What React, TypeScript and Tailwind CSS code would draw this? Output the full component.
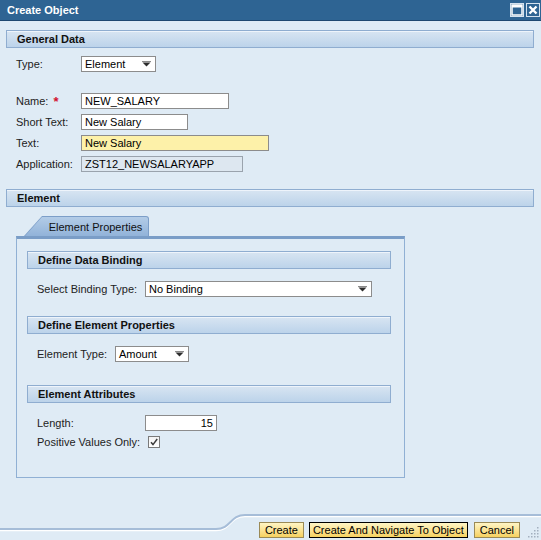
import React from "react";

const font = "font-['Liberation_Sans',Arial,sans-serif]";

function SectionHeader({ title }: { title: string }) {
  return (
    <div className="h-[18px] border border-[#8fadd0] bg-gradient-to-b from-[#d8e5f2] to-[#bcd3ea] pl-[10px] text-[11px] font-bold leading-[16px] text-[#111] shadow-[inset_0_1px_0_#eef4fb]">
      {title}
    </div>
  );
}

function Arrow() {
  return (
    <svg width="9" height="6" viewBox="0 0 9 6" className="shrink-0">
      <rect x="0" y="0" width="9" height="1" fill="#8a8a8a" />
      <polygon points="0.5,1.5 8.5,1.5 4.5,5.5" fill="#2d2d2d" />
    </svg>
  );
}

function Select({ value, width }: { value: string; width: string }) {
  return (
    <div
      className={`flex h-[16px] items-center justify-between border border-[#8c8c8c] bg-white pl-[3px] pr-[4px] text-[11px] leading-none text-black ${width}`}
    >
      <span>{value}</span>
      <Arrow />
    </div>
  );
}

function Input({
  value,
  width,
  tone = "white",
  right = false,
}: {
  value: string;
  width: string;
  tone?: "white" | "yellow" | "disabled";
  right?: boolean;
}) {
  const bg =
    tone === "yellow"
      ? "bg-[#fdf1a9] border-[#8c8c8c]"
      : tone === "disabled"
        ? "bg-[#dde7f0] border-[#9aa3ad]"
        : "bg-white border-[#8c8c8c]";
  return (
    <div
      className={`flex h-[16px] items-center border px-[3px] text-[11px] leading-none text-black ${bg} ${width} ${right ? "justify-end" : ""}`}
    >
      {value}
    </div>
  );
}

function Row({
  label,
  labelWidth,
  children,
  required = false,
}: {
  label: string;
  labelWidth: string;
  children: React.ReactNode;
  required?: boolean;
}) {
  return (
    <div className="flex h-[16px] items-center">
      <div className={`flex h-[16px] items-center text-[11px] leading-[16px] text-[#222] ${labelWidth}`}>
        {label}
        {required && <span className="ml-[5px] text-[13px] font-bold leading-none text-[#d3112e]">*</span>}
      </div>
      {children}
    </div>
  );
}

function Button({ label, focused = false, pad = "px-[5px]" }: { label: string; focused?: boolean; pad?: string }) {
  return (
    <button
      type="button"
      className={`flex h-[16px] items-center border bg-gradient-to-b from-[#fff5c4] to-[#f6d15e] text-[11px] leading-none text-black ${pad} ${
        focused ? "border-black" : "border-[#9a8a56]"
      }`}
    >
      {label}
    </button>
  );
}

export default function App() {
  return (
    <div className={`relative flex h-[540px] w-[541px] flex-col overflow-hidden bg-[#dfebf5] leading-[16px] ${font}`}>
      {/* title bar */}
      <div className="flex h-[21px] shrink-0 items-center justify-between border-b border-[#1f4870] bg-[#2e6493] pl-[7px] pr-[1px]">
        <span className="text-[11px] font-bold text-white">Create Object</span>
        <div className="flex gap-[2px]">
          <svg width="14" height="14" viewBox="0 0 14 14">
            <rect x="0" y="0" width="14" height="14" fill="#d4e2ef" />
            <rect x="1" y="1" width="12" height="12" fill="#2e6493" />
            <rect x="2" y="2" width="10" height="10" fill="none" stroke="#fff" strokeWidth="1.5" />
            <rect x="2" y="2" width="10" height="2.5" fill="#fff" />
          </svg>
          <svg width="14" height="14" viewBox="0 0 14 14">
            <rect x="0" y="0" width="14" height="14" fill="#d4e2ef" />
            <rect x="1" y="1" width="12" height="12" fill="#2e6493" />
            <path d="M3.5 3.5 L10.5 10.5 M10.5 3.5 L3.5 10.5" stroke="#fff" strokeWidth="2.4" />
          </svg>
        </div>
      </div>

      {/* body */}
      <div className="flex flex-1 flex-col px-[6px] pt-[9px]">
        <div className="w-[528px]">
          <SectionHeader title="General Data" />
        </div>

        <div className="mt-[8px] pl-[10px]">
          <Row label="Type:" labelWidth="w-[65px]">
            <Select value="Element" width="w-[75px]" />
          </Row>
          <div className="mt-[21px] flex flex-col gap-[5px]">
            <Row label="Name:" labelWidth="w-[65px]" required>
              <Input value="NEW_SALARY" width="w-[148px]" />
            </Row>
            <Row label="Short Text:" labelWidth="w-[65px]">
              <Input value="New Salary" width="w-[107px]" />
            </Row>
            <Row label="Text:" labelWidth="w-[65px]">
              <Input value="New Salary" width="w-[188px]" tone="yellow" />
            </Row>
            <Row label="Application:" labelWidth="w-[65px]">
              <Input value="ZST12_NEWSALARYAPP" width="w-[162px]" tone="disabled" />
            </Row>
          </div>
        </div>

        <div className="mt-[17px] w-[528px]">
          <SectionHeader title="Element" />
        </div>

        {/* tab strip */}
        <div className="ml-[18px] mt-[9px] flex">
          <div className="h-[20px] w-[125px] rounded-tr-[3px] bg-[#7c9ec8] [clip-path:polygon(18px_0,100%_0,100%_100%,0_100%)]">
            <div className="ml-[1px] mt-[1px] flex h-[19px] w-[123px] items-center justify-center rounded-tr-[2px] bg-gradient-to-b from-[#b3cce7] to-[#92b3d9] pl-[18px] text-[11px] text-[#111] [clip-path:polygon(17px_0,100%_0,100%_100%,0_100%)]">
              Element Properties
            </div>
          </div>
        </div>

        {/* tab panel */}
        <div className="ml-[10px] h-[242px] w-[389px] border border-t-[3px] border-[#90b0d4] border-t-[#7a9dc7] pl-[10px] pr-[13px] pt-[12px]">
          <SectionHeader title="Define Data Binding" />
          <div className="mt-[12px] pl-[10px]">
            <Row label="Select Binding Type:" labelWidth="w-[108px]">
              <Select value="No Binding" width="w-[227px]" />
            </Row>
          </div>

          <div className="mt-[19px]">
            <SectionHeader title="Define Element Properties" />
          </div>
          <div className="mt-[12px] pl-[10px]">
            <Row label="Element Type:" labelWidth="w-[78px]">
              <Select value="Amount" width="w-[74px]" />
            </Row>
          </div>

          <div className="mt-[23px]">
            <SectionHeader title="Element Attributes" />
          </div>
          <div className="mt-[12px] flex flex-col gap-[3px] pl-[10px]">
            <Row label="Length:" labelWidth="w-[108px]">
              <Input value="15" width="w-[72px]" right />
            </Row>
            <Row label="Positive Values Only:" labelWidth="w-[111px]">
              <svg width="12" height="12" viewBox="0 0 12 12">
                <defs>
                  <linearGradient id="cb" x1="0" y1="0" x2="0" y2="1">
                    <stop offset="0" stopColor="#f2f2f2" />
                    <stop offset="1" stopColor="#ffffff" />
                  </linearGradient>
                </defs>
                <rect x="0.5" y="0.5" width="11" height="11" fill="url(#cb)" stroke="#7a7a7a" />
                <path d="M3 6.2 L5 8.6 L9.2 3" fill="none" stroke="#3a3a3a" strokeWidth="1.5" />
              </svg>
            </Row>
          </div>
        </div>
      </div>

      {/* footer */}
      <div className="relative flex h-[32px] shrink-0 items-end justify-end pb-[2px] pr-[21px]">
        <svg className="absolute left-0 top-0" width="541" height="32" viewBox="0 0 541 32">
          <path d="M0 21 L216 21 C231 21 230 7 245 7 L541 7" fill="none" stroke="#fff" strokeWidth="1.5" transform="translate(0 1.5)" />
          <path d="M0 21 L216 21 C231 21 230 7 245 7 L541 7" fill="none" stroke="#a6bdd8" strokeWidth="2" />
        </svg>
        <div className="relative flex items-end gap-[5px]">
          <Button label="Create" />
          <Button label="Create And Navigate To Object" focused pad="px-[3px]" />
          <div className="ml-[1px] flex">
            <Button label="Cancel" />
          </div>
        </div>
        <svg className="absolute bottom-[1px] right-[1px]" width="14" height="14" viewBox="0 0 14 14">
          {[
            [11, 2],
            [8, 5],
            [11, 5],
            [5, 8],
            [8, 8],
            [11, 8],
            [2, 11],
            [5, 11],
            [8, 11],
            [11, 11],
          ].map(([x, y]) => (
            <rect key={`${x}-${y}`} x={x} y={y} width="1.5" height="1.5" fill="#a3b0bf" />
          ))}
        </svg>
      </div>
    </div>
  );
}
